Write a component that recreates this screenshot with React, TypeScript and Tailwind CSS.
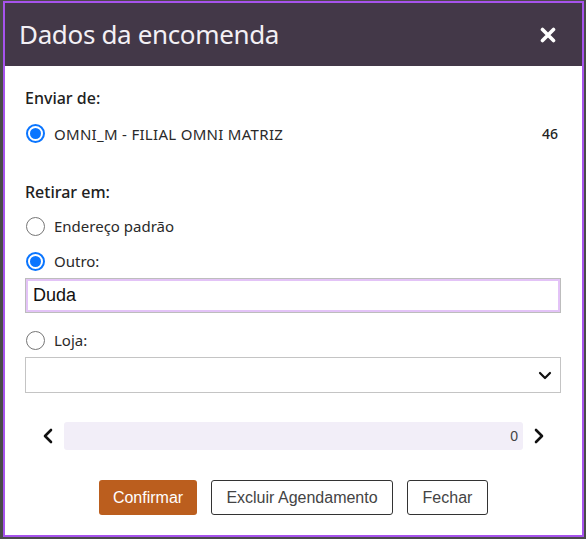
import React from "react";

function Radio({ checked }: { checked?: boolean }) {
  return checked ? (
    <span className="flex h-[19px] w-[19px] shrink-0 items-center justify-center rounded-full border-2 border-[#0a75ff] bg-white">
      <span className="h-[11px] w-[11px] rounded-full bg-[#0a75ff]" />
    </span>
  ) : (
    <span className="h-[19px] w-[19px] shrink-0 rounded-full border border-[#767676] bg-white" />
  );
}

function Chevron({ dir }: { dir: "left" | "right" | "down" }) {
  const d = dir === "left" ? "M9 2 L3 8 L9 14" : dir === "right" ? "M3 2 L9 8 L3 14" : "M2 3 L7 8 L12 3";
  const vb = dir === "down" ? "0 0 14 11" : "0 0 12 16";
  return (
    <svg viewBox={vb} className={dir === "down" ? "h-[11px] w-[14px]" : "h-[16px] w-[12px]"}>
      <path d={d} fill="none" stroke="#111" strokeWidth={dir === "down" ? 2.2 : 2.6} strokeLinecap="round" strokeLinejoin="round" />
    </svg>
  );
}

export default function App() {
  return (
    <div className="h-[539px] w-[586px] overflow-hidden bg-[#4a4a4a] pl-[3px] pt-[1px]">
      <div className="flex h-[536px] w-[581px] flex-col border-2 border-[#a653ec] bg-white font-['Noto_Sans',sans-serif] text-[#212121]">
        <div className="flex h-[63px] shrink-0 items-center justify-between bg-[#433848] pl-[14px] pr-[26px]">
          <h1 className="text-[26px] font-normal tracking-[-0.35px] text-[#f3f0f5]">Dados da encomenda</h1>
          <svg viewBox="0 0 16 16" className="h-[16px] w-[16px]">
            <path d="M2.5 2.5 L13.5 13.5 M13.5 2.5 L2.5 13.5" stroke="#fff" strokeWidth="3.6" strokeLinecap="round" />
          </svg>
        </div>

        <div className="flex flex-col px-[20px] pt-[20px]">
          <div className="text-[16px] font-medium leading-[24px]">Enviar de:</div>
          <div className="mt-[13px] flex items-center justify-between pl-[1px] pr-[4px]">
            <div className="flex items-center gap-[9px]">
              <Radio checked />
              <span className="text-[15px] leading-[20px] tracking-[0.3px] text-[#2a2a2a]">OMNI_M - FILIAL OMNI MATRIZ</span>
            </div>
            <span className="text-[14px] font-medium text-[#222]">46</span>
          </div>

          <div className="mt-[36px] text-[16px] font-medium leading-[24px]">Retirar em:</div>
          <div className="mt-[12px] flex items-center gap-[9px] pl-[1px]">
            <Radio />
            <span className="text-[15px] leading-[20px] text-[#2a2a2a]">Endereço padrão</span>
          </div>
          <div className="mt-[15px] flex items-center gap-[9px] pl-[1px]">
            <Radio checked />
            <span className="text-[15px] leading-[20px] text-[#2a2a2a]">Outro:</span>
          </div>
          <div className="mt-[7px] h-[35px] w-[536px] border border-[#bdbdbd]">
            <div className="flex h-full items-center border-2 border-[#e3c3f7] bg-white pl-[5px] font-['Liberation_Sans',sans-serif] text-[18px] text-[#111]">
              Duda
            </div>
          </div>
          <div className="mt-[17px] flex items-center gap-[9px] pl-[1px]">
            <Radio />
            <span className="text-[15px] leading-[20px] text-[#2a2a2a]">Loja:</span>
          </div>
          <div className="mt-[7px] flex h-[36px] w-[536px] items-center justify-end border border-[#c4c4c4] pr-[8px]">
            <Chevron dir="down" />
          </div>

          <div className="mt-[29px] flex items-center gap-[10px] pl-[17px]">
            <Chevron dir="left" />
            <div className="flex h-[28px] w-[459px] items-center justify-end rounded-[3px] bg-[#f2eef8] pr-[5px] font-['Liberation_Sans',sans-serif] text-[14px] text-[#444]">
              0
            </div>
            <Chevron dir="right" />
          </div>

          <div className="mt-[30px] flex justify-center gap-[14px] font-['Liberation_Sans',sans-serif] text-[16px]">
            <button className="h-[35px] w-[98px] rounded-[3px] bg-[#bb5e1e] text-white">Confirmar</button>
            <button className="h-[35px] w-[182px] rounded-[3px] border border-[#333] bg-white text-[#444]">Excluir Agendamento</button>
            <button className="h-[35px] w-[81px] rounded-[3px] border border-[#333] bg-white text-[#444]">Fechar</button>
          </div>
        </div>
      </div>
    </div>
  );
}
